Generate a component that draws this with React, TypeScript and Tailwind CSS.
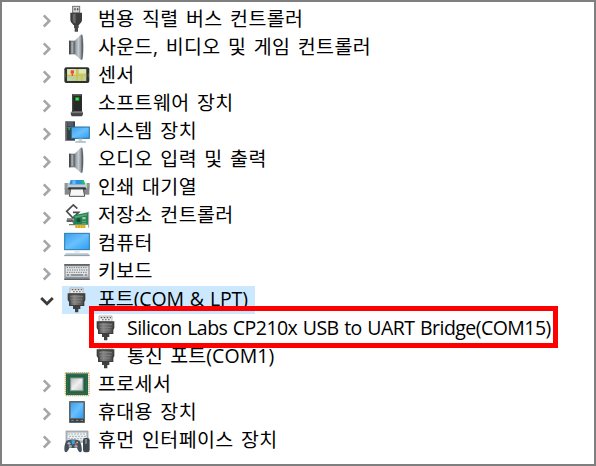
import type { ReactNode } from "react";

type IconName =
  | "usb" | "speaker" | "sensor" | "software" | "system" | "printer" | "storage"
  | "computer" | "keyboard" | "port" | "processor" | "portable" | "hid";

function Gradients() {
  return (
    <svg className="absolute h-0 w-0" aria-hidden="true">
      <defs>
        <linearGradient id="screen" x1="0" y1="0" x2="1" y2="1">
          <stop offset="0" stopColor="#3aa0ee" />
          <stop offset=".5" stopColor="#68c0ff" />
          <stop offset="1" stopColor="#2f9df0" />
        </linearGradient>
        <linearGradient id="metal" x1="0" y1="0" x2="1" y2="0">
          <stop offset="0" stopColor="#8d9298" />
          <stop offset=".5" stopColor="#c6cbd1" />
          <stop offset="1" stopColor="#7b8087" />
        </linearGradient>
        <linearGradient id="plug" x1="0" y1="0" x2="1" y2="0">
          <stop offset="0" stopColor="#444" />
          <stop offset=".35" stopColor="#858585" />
          <stop offset="1" stopColor="#484848" />
        </linearGradient>
        <linearGradient id="chip" x1="0" y1="0" x2="1" y2="1">
          <stop offset="0" stopColor="#b8b8b8" />
          <stop offset=".5" stopColor="#f0f0f0" />
          <stop offset="1" stopColor="#c0c0c0" />
        </linearGradient>
      </defs>
    </svg>
  );
}

const art: Record<IconName, ReactNode> = {
  usb: (
    <>
      <rect x="26" y="4" width="21" height="20" fill="#d4d4d4" stroke="#707070" strokeWidth="3" />
      <path d="M31 10h4v6h-4zM39 10h4v6h-4z" fill="#444" />
      <path d="M19 23h35v22c0 8-6 9-9 15H28c-3-6-9-7-9-15z" fill="#3c3c3c" />
      <path d="M26 26h9v29h-5c-2-4-4-5-4-10z" fill="#686868" />
      <path d="M30 60h14v9h-2v11H32V69h-2z" fill="#484848" />
    </>
  ),
  speaker: (
    <>
      <path d="M15 23h18v41H15z" fill="#7b8087" />
      <path d="M15 23h5v41h-5z" fill="#45494e" />
      <path d="M22 27h5v33h-5z" fill="#a5aab0" />
      <path d="M32 23 50 5h5v75h-5L32 64z" fill="url(#metal)" />
      <path d="M53 5c6 4 6 71 0 75z" fill="#5f6469" stroke="#5f6469" />
      <path d="M32 24v39" stroke="#595e63" strokeWidth="2" />
    </>
  ),
  sensor: (
    <>
      <rect x="1" y="19" width="75" height="47" rx="6" fill="#303030" />
      <path d="M9 24h58v36H9z" fill="#b5d496" />
      <path d="M10 25h25v16H10zM45 25h21v12H45z" fill="#dce9af" />
      <path d="M9 43h58M39 24v36M53 44v16" stroke="#e6b83d" strokeWidth="4" />
      <path d="M20 28h10v10H20z" fill="#ef454d" />
      <path d="M23 38h4v6h-4z" fill="#d34746" />
      <path d="M12 52h8v6h-8z" fill="#c3d8cb" />
      <path d="M4 37v12M73 37v12" stroke="#686868" strokeWidth="2" />
    </>
  ),
  software: (
    <>
      <path d="M24 12h30v53H24z" fill="#292929" />
      <path d="M25 12h28v5H25z" fill="#606060" />
      <path d="M24 17h4v48h-4z" fill="#454545" />
      <path d="M21 65h36v7l-3 7H23l-3-7z" fill="#454545" />
      <path d="M21 68h36" stroke="#a4a4a4" strokeWidth="2" />
      <rect x="34" y="22" width="11" height="10" fill="#25f53d" stroke="#28752a" strokeWidth="2" />
    </>
  ),
  system: (
    <>
      <path d="M4 10h29v58H4z" fill="#393e42" />
      <path d="M4 10h4v58H4z" fill="#747a7e" />
      <path d="M10 15h18M10 21h18M10 28h15" stroke="#929a9e" strokeWidth="2" />
      <path d="M13 31h5v4h-5z" fill="#21c638" />
      <rect x="22" y="27" width="54" height="34" fill="url(#screen)" stroke="#256f9b" strokeWidth="3" />
      <path d="M44 62h11v8H44z" fill="#c7d1d7" />
      <path d="M34 72h32" stroke="#7d95a2" strokeWidth="3" />
    </>
  ),
  printer: (
    <>
      <path d="M20 18h39l5 14H15z" fill="#2c8fe0" />
      <path d="M25 19h10v12h-10z" fill="#61bdfa" />
      <path d="M53 19h6l4 11H53z" fill="#17ca58" />
      <path d="M2 27h13v5h49v-5h13v20H2z" fill="#c9cccf" />
      <path d="M2 27h9v16H2zM69 27h8v16h-8z" fill="#8f9598" />
      <path d="M2 42h74v20H2z" fill="#85898c" />
      <path d="M13 40h52v7H13z" fill="#292e30" />
      <path d="M20 45h38l4 22H16z" fill="#f7f7f7" stroke="#4e5255" strokeWidth="3" />
      <path d="M68 33h5v3h-5z" fill="#49de50" />
    </>
  ),
  storage: (
    <>
      <path d="M40 20 28 9 8 28l19 20 17-17H27" fill="none" stroke="#4c4c4c" strokeWidth="5" />
      <path d="M9 51h14l8 17H15" fill="none" stroke="#777" strokeWidth="4" />
      <path d="M8 53h21v7H8z" fill="#626262" />
      <path d="m29 40 43-9v37H29z" fill="#238255" />
      <path d="m33 43 36-8v5l-36 8z" fill="#56aa72" />
      <path d="M38 49h11v11H38z" fill="#174d37" />
      <path d="M55 45h10v7H55z" fill="#a8c7a0" />
      <path d="M54 58h13M54 64h13" stroke="#89bd89" strokeWidth="2" />
      <path d="M74 29v48" stroke="#9b9f9d" strokeWidth="3" />
      <path d="M34 69h30v9H34z" fill="#e3a414" />
      <path d="M41 69v9M49 69v9M57 69v9" stroke="#f9d251" strokeWidth="2" />
    </>
  ),
  computer: (
    <>
      <rect x="2" y="10" width="74" height="49" fill="url(#screen)" stroke="#2679ac" strokeWidth="3" />
      <path d="M31 61h16v7H31z" fill="#e4e8ea" />
      <path d="M6 70h66l5 5v3H1v-3z" fill="#b7c5cf" />
      <path d="M1 77h76" stroke="#768995" strokeWidth="2" />
    </>
  ),
  keyboard: (
    <>
      <path d="M1 18h76v48H1z" fill="#8d9499" />
      <path d="M1 18h76v5H1z" fill="#5e666c" />
      <path d="M5 25h68v31H5z" fill="#e3e5e5" />
      <path d="M8 29h62M10 36h60M8 43h62" stroke="#73797d" strokeWidth="3" strokeDasharray="4 3" />
      <path d="M8 51h8m4 0h38m4 0h8" stroke="#777e82" strokeWidth="4" />
      <path d="M1 62h76v4H1z" fill="#5b646a" />
    </>
  ),
  port: (
    <>
      <path d="M18 6h39v17H18z" fill="#eee" stroke="#999" strokeWidth="2" />
      <path d="M23 9h5v4h-5zM32 9h5v4h-5zM41 9h5v4h-5zM50 9h4v4h-4zM27 16h5v3h-5zM36 16h5v3h-5zM45 16h5v3h-5z" fill="#606060" />
      <path d="M11 22h53v20l-3 6v12H48v7H28v-7H15V48l-4-6z" fill="#3d3d3d" />
      <path d="M15 26h45v14l-3 6v11H19V46l-4-6z" fill="url(#plug)" />
      <path d="M19 32h38M20 40h35M22 48h30" stroke="#919191" strokeWidth="2" />
      <path d="M27 59h7v10h-7zM42 59h7v10h-7zM33 62h10v17H33z" fill="#404040" />
    </>
  ),
  processor: (
    <>
      <path d="M5 8h69M5 77h69" stroke="#b89435" strokeWidth="4" strokeDasharray="3 3" />
      <path d="M4 10v66M75 10v66" stroke="#b89435" strokeWidth="4" strokeDasharray="3 3" />
      <path d="M6 10h66v65H6z" fill="#246347" />
      <path d="M10 14h58v57H10z" fill="none" stroke="#2f7956" strokeWidth="2" />
      <rect x="20" y="24" width="37" height="38" fill="url(#chip)" stroke="#83998d" strokeWidth="3" />
    </>
  ),
  portable: (
    <>
      <rect x="15" y="9" width="48" height="66" rx="2" fill="#606569" />
      <path d="M20 14h38v46H20z" fill="url(#screen)" />
      <path d="M18 63h42v9H18z" fill="#394047" />
      <path d="M22 67h7m7 0h7m7 0h7" stroke="#90979c" strokeWidth="3" />
    </>
  ),
  hid: (
    <>
      <path d="M6 15h66v34H6z" fill="#b4bbc0" stroke="#89949b" strokeWidth="2" />
      <path d="M11 20h56v23H11z" fill="#edf0f1" />
      <path d="M13 24h52M16 31h49M13 38h52" stroke="#8b959d" strokeWidth="3" strokeDasharray="4 5" />
      <path d="M8 44c8-5 30-5 38 0 5 5 9 22 7 32-4 7-10 1-14-10H16C12 77 5 82 2 76-1 66 3 49 8 44z" fill="#46505a" />
      <path d="M10 52h10M15 47v10" stroke="#bec7cd" strokeWidth="3" />
      <path d="M22 43h12l-3 12h-7z" fill="#36a6ef" />
      <path d="M37 47h5v5h-5z" fill="#efb837" />
      <path d="M33 51h5v5h-5z" fill="#ed5149" />
      <circle cx="19" cy="61" r="5" fill="#9aa2a8" />
      <circle cx="36" cy="61" r="5" fill="#9aa2a8" />
      <rect x="57" y="36" width="20" height="43" rx="7" fill="#3f474e" />
      <path d="M66 39v14" stroke="#9ba5ac" strokeWidth="4" />
    </>
  ),
};

function DeviceIcon({ name }: { name: IconName }) {
  return (
    <svg viewBox="0 0 78 84" className="h-[28px] w-[26px] shrink-0">
      {art[name]}
    </svg>
  );
}

function Chevron({ open }: { open?: boolean }) {
  return (
    <svg viewBox="0 0 16 28" className="h-[28px] w-[16px] shrink-0" fill="none">
      {open ? (
        <path d="m2.2 12 5.8 5.8 5.8-5.8" stroke="#3b3b3b" strokeWidth="2.8" />
      ) : (
        <path d="m4.8 10.3 5.5 5.6-5.5 5.6" stroke="#a6a6a6" strokeWidth="2.6" />
      )}
    </svg>
  );
}

interface Device {
  label: string;
  icon: IconName;
  child?: boolean;
  open?: boolean;
  text?: string;
}

const hangul = "tracking-[0.36px] [word-spacing:2px]";

const devices: Device[] = [
  { label: "범용 직렬 버스 컨트롤러", icon: "usb" },
  { label: "사운드, 비디오 및 게임 컨트롤러", icon: "speaker" },
  { label: "센서", icon: "sensor" },
  { label: "소프트웨어 장치", icon: "software" },
  { label: "시스템 장치", icon: "system" },
  { label: "오디오 입력 및 출력", icon: "speaker" },
  { label: "인쇄 대기열", icon: "printer" },
  { label: "저장소 컨트롤러", icon: "storage" },
  { label: "컴퓨터", icon: "computer" },
  { label: "키보드", icon: "keyboard" },
  { label: "포트(COM & LPT)", icon: "port", open: true, text: "tracking-[-0.12px] [word-spacing:1px]" },
  { label: "Silicon Labs CP210x USB to UART Bridge(COM15)", icon: "port", child: true, text: "tracking-[-0.54px] [word-spacing:1px]" },
  { label: "통신 포트(COM1)", icon: "port", child: true, text: "tracking-[0.08px] [word-spacing:2px]" },
  { label: "프로세서", icon: "processor" },
  { label: "휴대용 장치", icon: "portable" },
  { label: "휴먼 인터페이스 장치", icon: "hid" },
];

function DeviceRow({ label, icon, child, open, text }: Device) {
  return (
    <li className={child ? "flex h-[28.07px] items-center pl-[91px]" : "flex h-[28.07px] items-center pl-[37px]"}>
      {!child && <Chevron open={open} />}
      <div
        className={
          open
            ? "ml-[6.5px] flex h-full w-[193.5px] items-center bg-[#cce8ff] pl-[2.5px]"
            : child
              ? "flex h-full items-center"
              : "ml-[9px] flex h-full items-center"
        }
      >
        <DeviceIcon name={icon} />
        <span className={`ml-[8px] whitespace-nowrap pb-[1px] text-[19.5px] leading-[26px] ${text ?? hangul}`}>{label}</span>
      </div>
    </li>
  );
}

export default function App() {
  return (
    <main className="relative h-[466px] w-[596px] overflow-hidden border-2 border-[#7f7f7f] bg-white pt-[3.3px] font-['Open_Sans','Noto_Sans_CJK_KR',sans-serif] text-black">
      <Gradients />
      <ul>
        {devices.map((device) => (
          <DeviceRow key={device.label} {...device} />
        ))}
      </ul>
      <div className="absolute left-[87px] top-[304px] h-[42px] w-[469px] border-[5px] border-[#ff0000]" />
    </main>
  );
}
